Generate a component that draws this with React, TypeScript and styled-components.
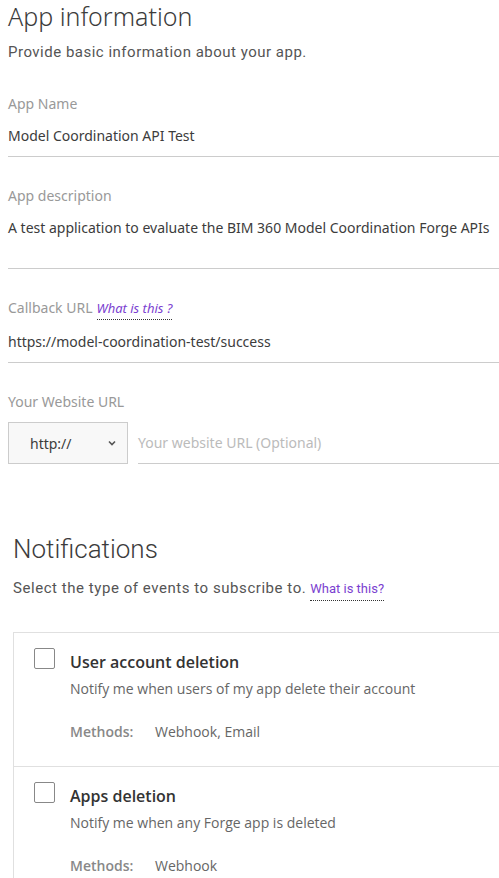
import React from "react";
import styled, { createGlobalStyle } from "styled-components";

const Global = createGlobalStyle`
  html, body { margin: 0; padding: 0; background: #fff; }
  body { font-family: "Noto Sans", "Open Sans", sans-serif; color: #3c3c3c; }
`;

const Page = styled.div`
  padding: 0 0 0 8px;
  width: 491px;
`;

const Title = styled.h1`
  margin: 0;
  font-size: 25px;
  font-weight: 300;
  line-height: 32px;
  color: #3c3c3c;
`;

const Intro = styled.p`
  margin: 8px 0 0;
  font-family: "Roboto", sans-serif;
  font-size: 15px;
  letter-spacing: 0.5px;
  line-height: 24px;
  color: #555;
`;

const Field = styled.div<{ $top: number }>`
  margin-top: ${(p) => p.$top}px;
  display: flex;
  flex-direction: column;
`;

const Label = styled.div`
  font-size: 14px;
  line-height: 20px;
  color: #999;
  display: flex;
  align-items: baseline;
  gap: 4px;
`;

const Help = styled.span<{ $italic?: boolean }>`
  font-size: 13px;
  color: #7b3fd0;
  font-style: ${(p) => (p.$italic ? "italic" : "normal")};
  border-bottom: 1px dotted #333;
  padding-bottom: 3px;
  line-height: 16px;
  letter-spacing: 0;
`;

const Value = styled.div<{ $h: number }>`
  font-size: 14px;
  line-height: 20px;
  color: #3c3c3c;
  padding-top: 12px;
  height: ${(p) => p.$h}px;
  box-sizing: border-box;
  border-bottom: 1px solid #ccc;
`;

const UrlRow = styled.div`
  display: flex;
  align-items: stretch;
  gap: 10px;
  margin-top: 10px;
`;

const Select = styled.div`
  width: 120px;
  height: 42px;
  box-sizing: border-box;
  border: 1px solid #ccc;
  background: #f8f8f8;
  display: flex;
  align-items: center;
  justify-content: space-between;
  padding: 0 10px 0 21px;
  font-size: 14px;
  color: #3c3c3c;
`;

const UrlInput = styled.div`
  flex: 1;
  border-bottom: 1px solid #ccc;
  font-size: 14px;
  color: #bbb;
  display: flex;
  align-items: center;
`;

const Section = styled.div`
  margin-top: 69px;
  padding-left: 5px;
`;

const NotifTitle = styled.h2`
  margin: 0;
  font-family: "Roboto", sans-serif;
  font-size: 26px;
  font-weight: 300;
  line-height: 32px;
  color: #3c3c3c;
`;

const NotifIntro = styled.div`
  margin-top: 11px;
  font-family: "Roboto", sans-serif;
  font-size: 15px;
  letter-spacing: 0.55px;
  color: #555;
  line-height: 24px;
  display: flex;
  align-items: baseline;
  gap: 4px;
`;

const Card = styled.div`
  margin-top: 31px;
  border: 1px solid #e0e0e0;
  border-right: none;
`;

const Item = styled.div<{ $last?: boolean }>`
  display: flex;
  gap: 15px;
  padding: 15px 20px 0;
  height: ${(p) => (p.$last ? 130 : 134)}px;
  box-sizing: border-box;
  border-bottom: ${(p) => (p.$last ? "none" : "1px solid #e0e0e0")};
`;

const Box = styled.div`
  width: 21px;
  height: 21px;
  box-sizing: border-box;
  border: 1px solid #888;
  border-radius: 2px;
  flex: none;
`;

const ItemBody = styled.div`
  display: flex;
  flex-direction: column;
  font-family: "Open Sans", sans-serif;
`;

const ItemTitle = styled.div`
  font-size: 16px;
  font-weight: 600;
  color: #333;
  line-height: 28px;
`;

const ItemDesc = styled.div`
  font-size: 14px;
  color: #666;
  line-height: 22px;
  margin-top: 2px;
`;

const Methods = styled.div`
  margin-top: 21px;
  display: flex;
  font-size: 14px;
  line-height: 22px;
`;

const MethodsLabel = styled.span`
  font-weight: 600;
  color: #888;
  width: 85px;
`;

const MethodsValue = styled.span`
  color: #666;
`;

const Chevron = () => (
  <svg width="10" height="8" viewBox="0 0 10 8">
    <path d="M2 2.5 L5 5.5 L8 2.5" fill="none" stroke="#555" strokeWidth="1.6" />
  </svg>
);

const items = [
  {
    title: "User account deletion",
    desc: "Notify me when users of my app delete their account",
    methods: "Webhook, Email",
  },
  {
    title: "Apps deletion",
    desc: "Notify me when any Forge app is deleted",
    methods: "Webhook",
  },
];

export default function App() {
  return (
    <>
      <Global />
      <Page>
        <Title>App information</Title>
        <Intro>Provide basic information about your app.</Intro>

        <Field $top={30}>
          <Label>App Name</Label>
          <Value $h={43}>Model Coordination API Test</Value>
        </Field>

        <Field $top={29}>
          <Label>App description</Label>
          <Value $h={63}>A test application to evaluate the BIM 360 Model Coordination Forge APIs</Value>
        </Field>

        <Field $top={29}>
          <Label>
            Callback URL <Help $italic>What is this ?</Help>
          </Label>
          <Value $h={43}>https://model-coordination-test/success</Value>
        </Field>

        <Field $top={29}>
          <Label>Your Website URL</Label>
          <UrlRow>
            <Select>
              <span>http://</span>
              <Chevron />
            </Select>
            <UrlInput>Your website URL (Optional)</UrlInput>
          </UrlRow>
        </Field>

        <Section>
          <NotifTitle>Notifications</NotifTitle>
          <NotifIntro>
            Select the type of events to subscribe to. <Help>What is this?</Help>
          </NotifIntro>
          <Card>
            {items.map((it, i) => (
              <Item key={it.title} $last={i === items.length - 1}>
                <Box />
                <ItemBody>
                  <ItemTitle>{it.title}</ItemTitle>
                  <ItemDesc>{it.desc}</ItemDesc>
                  <Methods>
                    <MethodsLabel>Methods:</MethodsLabel>
                    <MethodsValue>{it.methods}</MethodsValue>
                  </Methods>
                </ItemBody>
              </Item>
            ))}
          </Card>
        </Section>
      </Page>
    </>
  );
}
